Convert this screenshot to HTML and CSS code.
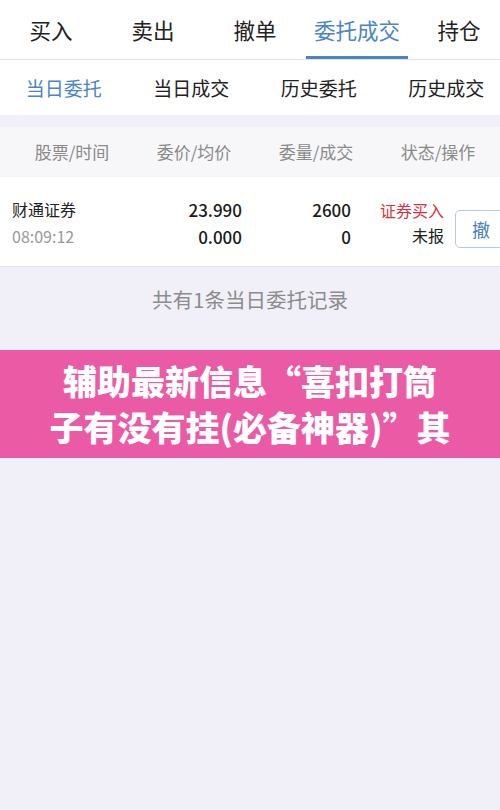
FILE: index.html
```html
<!DOCTYPE html>
<html lang="zh">
<head>
<meta charset="utf-8">
<link rel="stylesheet" href="styles.css">
</head>
<body>
<div class="page">
  <div class="tabs">
    <div class="tab">买入</div>
    <div class="tab">卖出</div>
    <div class="tab">撤单</div>
    <div class="tab active">委托成交</div>
    <div class="tab">持仓</div>
  </div>
  <div class="subtabs">
    <div class="subtab active">当日委托</div>
    <div class="subtab">当日成交</div>
    <div class="subtab">历史委托</div>
    <div class="subtab">历史成交</div>
  </div>
  <div class="thead">
    <div class="th">股票/时间</div>
    <div class="th">委价/均价</div>
    <div class="th">委量/成交</div>
    <div class="th">状态/操作</div>
  </div>
  <div class="row">
    <div class="c1">
      <div class="name">财通证券</div>
      <div class="time">08:09:12</div>
    </div>
    <div class="c2 num">
      <div>23.990</div>
      <div>0.000</div>
    </div>
    <div class="c3 num">
      <div>2600</div>
      <div>0</div>
    </div>
    <div class="c4">
      <div class="buy">证券买入</div>
      <div class="status">未报</div>
    </div>
    <div class="btn">撤</div>
  </div>
  <div class="summary">共有1条当日委托记录</div>
  <div class="banner">辅助最新信息“喜扣打筒<br>子有没有挂(必备神器)”其</div>
</div>
</body>
</html>
```
FILE: styles.css
```css
html, body {
  margin: 0;
  padding: 0;
  background: #f1f0f8;
}
body {
  font-family: "Noto Sans CJK SC", "Noto Sans", sans-serif;
  color: #222;
}
.page {
  width: 500px;
  height: 810px;
  overflow: hidden;
}
.tabs {
  display: flex;
  background: #fff;
  border-bottom: 1px solid #e2e2e6;
  height: 59px;
}
.tab {
  flex: 0 0 102px;
  box-sizing: border-box;
  height: 59px;
  border-bottom: 3px solid transparent;
  text-align: center;
  font-size: 21.5px;
  line-height: 56px;
  padding-top: 2px;
  color: #222;
}
.tab.active {
  color: #4a85c6;
  border-bottom-color: #4a85c6;
}
.subtabs {
  display: flex;
  background: #fff;
  height: 55px;
}
.subtab {
  flex: 0 0 127.5px;
  text-align: center;
  font-size: 19px;
  line-height: 55px;
  color: #222;
}
.subtab.active {
  color: #4a85c6;
}
.thead {
  margin-top: 12px;
  display: flex;
  height: 50px;
  background: #f7f7f9;
  padding-left: 11px;
}
.th {
  flex: 0 0 122px;
  text-align: center;
  font-size: 17px;
  line-height: 50px;
  color: #8a8a8a;
}
.row {
  display: flex;
  background: #fff;
  height: 90px;
  border-bottom: 1px solid #e4e4ea;
  box-sizing: border-box;
  padding-top: 19px;
}
.row > div {
  line-height: 27px;
}
.c1 {
  flex: 0 0 130px;
  padding-left: 12px;
  box-sizing: border-box;
  font-size: 16px;
}
.time {
  color: #999;
  font-size: 16px;
}
.num {
  text-align: right;
  font-size: 17px;
  font-weight: 500;
  color: #1a1a1a;
}
.c2 { flex: 0 0 112px; }
.c3 { flex: 0 0 109px; }
.c4 {
  flex: 0 0 93px;
  text-align: right;
  font-size: 16px;
}
.buy {
  color: #d8323e;
  padding-top: 2px;
  line-height: 25px;
}
.status { color: #222; line-height: 25px; }
.btn {
  flex: 0 0 60px;
  margin-left: 11px;
  margin-top: 14px;
  height: 38px;
  box-sizing: border-box;
  border: 1px solid #b9c9d9;
  border-radius: 5px;
  padding-left: 16px;
  font-size: 18px;
  line-height: 36px !important;
  color: #4a80b8;
}
.summary {
  height: 83px;
  text-align: center;
  font-size: 20.5px;
  line-height: 64px;
  color: #8c8c8c;
}
.banner {
  background: #ea5aa5;
  color: #fff;
  height: 108px;
  box-sizing: border-box;
  padding-top: 8px;
  text-align: center;
  font-size: 34px;
  font-weight: 900;
  line-height: 46px;
}
```
